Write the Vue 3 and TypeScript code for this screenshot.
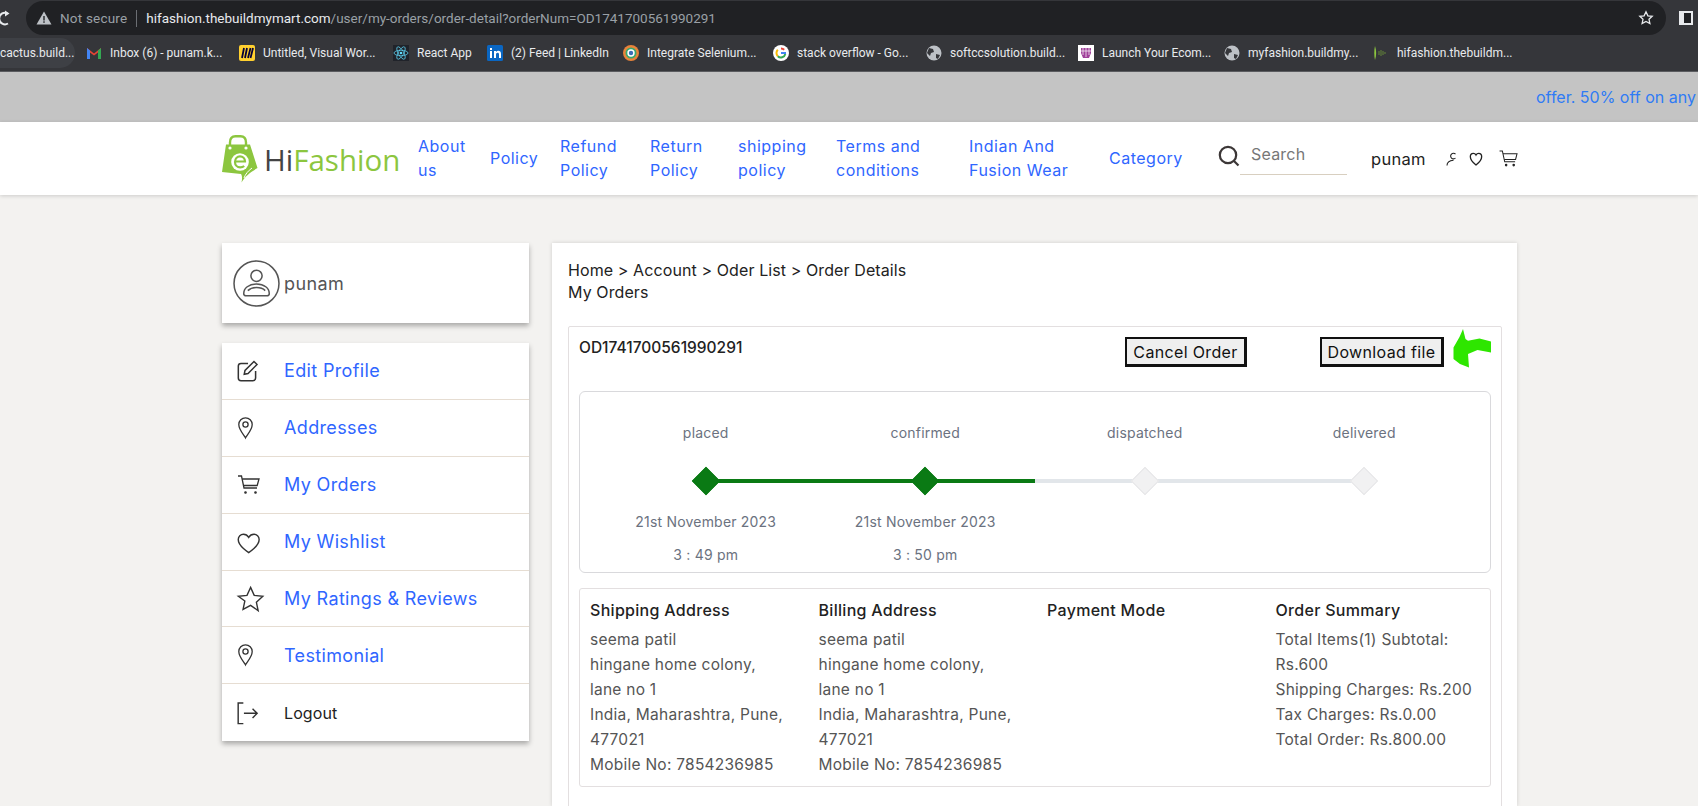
<template>
  <div class="page">
    <!-- browser chrome -->
    <div class="toolbar">
      <svg class="reload" viewBox="0 0 16 16" fill="none" stroke="#e8eaed" stroke-width="2"><path d="M9.500 3.300A5.800 5.800 0 1 0 10 13.500" /><path d="M7 0.500l4.500 3L7 6.500z" fill="#e8eaed" stroke="none" /></svg>
      <div class="urlbar">
        <svg class="warn" viewBox="0 0 16 16"><path d="M8 1.500 15.500 14.500H.5z" fill="#bdc1c6" /><rect x="7.300" y="6" width="1.400" height="4.500" fill="#202124" /><rect x="7.300" y="11.300" width="1.400" height="1.500" fill="#202124" /></svg>
        <span class="not-secure">Not secure</span>
        <span class="url-sep"></span>
        <span class="url"><b>hifashion.thebuildmymart.com</b>/user/my-orders/order-detail?orderNum=OD1741700561990291</span>
        <svg class="star" viewBox="0 0 16 16" fill="none" stroke="#e8eaed" stroke-width="1.300"><path d="M8 1.800l1.900 4 4.300.5-3.200 3 .9 4.300L8 11.400l-3.900 2.200.9-4.300-3.200-3 4.300-.5z" /></svg>
      </div>
      <div class="side-panel"><span></span></div>
    </div>
    <div class="bookmarks">
      <div class="bm-first">cactus.build...</div>
      <div v-for="b in bookmarks" :key="b.text" class="bm" :style="{ width: b.w + 'px' }">
        <svg class="bm-icon" viewBox="0 0 16 16" v-html="b.icon"></svg>
        <span>{{ b.text }}</span>
      </div>
    </div>

    <!-- offer strip -->
    <div class="offer"><span>offer. 50% off on any</span></div>

    <!-- site header -->
    <header class="site-header">
      <div class="logo">
        <svg class="logo-bag" viewBox="0 0 36 48">
          <path d="M8 12V7.500C8 3 10.500 1.200 13.500 1.200h5c3 0 5.500 1.800 5.500 6.300V13" fill="none" stroke="#8cc63f" stroke-width="2.400" />
          <path d="M4 9.500H28L35.500 33C29 37 23 41 19.500 47.500 20.500 43 20 40.500 19 39L0 37z" fill="#8cc63f" />
          <circle cx="8" cy="13" r="1.600" fill="#fff" />
          <circle cx="24" cy="13" r="1.600" fill="#fff" />
          <circle cx="18" cy="27" r="8.800" fill="#fff" />
          <path d="M13 26.500h10c0-3.200-2.200-5.200-5-5.200s-5 2.400-5 5.600 2.200 5.500 5.200 5.500c1.600 0 3-.5 4-1.400" fill="none" stroke="#8cc63f" stroke-width="2.200" />
          <path d="M30 33C26 36 23.500 39 22 43" fill="none" stroke="#fff" stroke-width="1" />
        </svg>
        <span class="logo-text"><span class="logo-hi">Hi</span>Fashion</span>
      </div>
      <nav class="nav">
        <a v-for="n in navLinks" :key="n" class="nav-link">{{ n }}</a>
      </nav>
      <svg class="search-icon" viewBox="0 0 22 22" fill="none" stroke="#3c3737" stroke-width="2.200"><circle cx="10" cy="10" r="8.200" /><path d="M16 16l4.500 4.500" /></svg>
      <div class="search">Search</div>
      <span class="user-name">punam</span>
      <svg class="hd-person" viewBox="0 0 10 14" fill="none" stroke="#222" stroke-width="1.100"><path d="M9.500 2.200A2.800 2.800 0 1 0 9.500 6" /><path d="M1 13.500C1 10.500 3.500 8.600 7.500 8.300" /></svg>
      <svg class="hd-heart" viewBox="0 0 24 24" fill="none" stroke="#222" stroke-width="2"><path d="M12 21S3.500 14 3.500 8.500C3.500 5.500 5.700 3.500 8 3.500c1.800 0 3.200 1 4 2.500.8-1.500 2.200-2.500 4-2.500 2.300 0 4.500 2 4.500 5C20.500 14 12 21 12 21z" /></svg>
      <svg class="hd-cart" viewBox="0 0 20 18" fill="none" stroke="#222" stroke-width="1.100"><path d="M.5 1H3.500L6 12.500H17" /><path d="M4.200 4H19L17.500 10H5.500" /><circle cx="7.500" cy="16" r=".8" fill="#222" /><circle cx="15.500" cy="16" r=".8" fill="#222" /></svg>
    </header>

    <main class="content">
      <!-- left column -->
      <aside class="side">
        <div class="card profile">
          <svg class="avatar" viewBox="0 0 46 46" fill="none" stroke="#555" stroke-width="1.500">
            <circle cx="23" cy="23" r="22" />
            <circle cx="23" cy="15.500" r="5.500" />
            <path d="M10.500 33c0-5.500 5-9.500 12.500-9.500S35.500 27.500 35.500 33c0 1.500-1 2-2.500 2H13c-1.500 0-2.500-.5-2.500-2z" />
            <path d="M14.500 30c2-2 5-3 8.500-3s6.500 1 8.500 3" />
          </svg>
          <span>punam</span>
        </div>
        <div class="card menu">
          <div v-for="m in menu" :key="m.text" class="menu-row">
            <svg class="menu-icon" viewBox="0 0 26 24" fill="none" stroke="#333" stroke-width="1.300" v-html="icons[m.icon]"></svg>
            <span :class="m.plain ? 'menu-plain' : 'menu-link'">{{ m.text }}</span>
          </div>
        </div>
      </aside>

      <!-- order detail -->
      <section class="detail">
        <div class="crumbs">Home &gt; Account &gt; Oder List &gt; Order Details</div>
        <div class="crumbs">My Orders</div>

        <div class="order">
          <div class="order-top">
            <span class="order-num">OD1741700561990291</span>
            <button class="btn btn-cancel">Cancel Order</button>
            <button class="btn btn-download">Download file</button>
          </div>
          <svg class="hand" viewBox="0 0 40 40"><path d="M11 0 13.500 10l2.500 1.700 11.500-2.300L39 12.500V23.500L25.500 21 16 25l1 13.500-9-3.500-6.500-5V18.500L7.500 8z" fill="#2ee600" /></svg>

          <div class="tracker">
            <div v-for="(s, i) in steps" :key="s.label" class="step">
              <div class="step-label">{{ s.label }}</div>
              <div class="rail">
                <span class="seg" :class="segClass(i, 'left')"></span>
                <span class="seg" :class="segClass(i, 'right')"></span>
                <span class="diamond" :class="{ done: s.done }"></span>
              </div>
              <div class="step-date">{{ s.date }}</div>
              <div class="step-time">{{ s.time }}</div>
            </div>
          </div>

          <div class="info">
            <div v-for="c in infoCols" :key="c.title" class="info-col">
              <div class="info-title">{{ c.title }}</div>
              <div v-for="l in c.lines" :key="l" class="info-line">{{ l }}</div>
            </div>
          </div>
        </div>
      </section>
    </main>
  </div>
</template>

<script setup lang="ts">
const globe = '<circle cx="8" cy="8" r="7.500" fill="#bdc1c6"/><path d="M3 3l4 1 1 3-3 1-1 3-3-3zM10 9l4 1-2 4-2-1z" fill="#35363a"/>'

const bookmarks = [
  { text: 'Inbox (6) - punam.k...', w: 153, icon: '<path d="M1 14V3l7 5.500L15 3v11h-3V7.500L8 10.500 4 7.500V14z" fill="#ea4335"/><path d="M1 14V3l3 2.500V14z" fill="#4285f4"/><path d="M15 14V3l-3 2.500V14z" fill="#34a853"/>' },
  { text: 'Untitled, Visual Wor...', w: 154, icon: '<rect width="16" height="16" rx="2" fill="#ffd02f"/><path d="M5 3 3 13M8 3 6 13M11.500 3 9 13M14 3l-2.500 10" stroke="#050038" stroke-width="1.800"/>' },
  { text: 'React App', w: 94, icon: '<rect width="16" height="16" fill="#20232a"/><circle cx="8" cy="8" r="1.300" fill="#61dafb"/><g fill="none" stroke="#61dafb" stroke-width=".7"><ellipse cx="8" cy="8" rx="7" ry="2.700"/><ellipse cx="8" cy="8" rx="7" ry="2.700" transform="rotate(60 8 8)"/><ellipse cx="8" cy="8" rx="7" ry="2.700" transform="rotate(120 8 8)"/></g>' },
  { text: '(2) Feed | LinkedIn', w: 136, icon: '<rect width="16" height="16" rx="1.500" fill="#0a66c2"/><path d="M3 6h2v7H3zM3 3h2v2H3zM7 6h2v1c.6-.8 1.400-1.200 2.300-1.200C13 5.800 14 7 14 9v4h-2V9.500C12 8.300 11.500 7.700 10.500 7.700S9 8.400 9 9.500V13H7z" fill="#fff"/>' },
  { text: 'Integrate Selenium...', w: 150, icon: '<circle cx="8" cy="8" r="8" fill="#e8833a"/><circle cx="8" cy="8" r="5.500" fill="#3aa76d"/><circle cx="8" cy="8" r="3.700" fill="#fff"/><circle cx="8" cy="8" r="2.200" fill="#3a6db5"/>' },
  { text: 'stack overflow - Go...', w: 153, icon: '<circle cx="8" cy="8" r="8" fill="#fff"/><path d="M8 3.500A4.500 4.500 0 0 1 11.200 4.800" fill="none" stroke="#ea4335" stroke-width="2"/><path d="M4.800 4.800A4.500 4.500 0 0 0 4.800 11.200" fill="none" stroke="#fbbc05" stroke-width="2"/><path d="M4.800 11.200A4.500 4.500 0 0 0 12.300 9" fill="none" stroke="#34a853" stroke-width="2"/><path d="M8 8h5" stroke="#4285f4" stroke-width="2"/>' },
  { text: 'softccsolution.build...', w: 152, icon: globe },
  { text: 'Launch Your Ecom...', w: 146, icon: '<rect width="16" height="16" fill="#fff"/><path d="M3 3h10v5l-2 5H5L3 8z" fill="#a0409a"/><path d="M3 6h10M5 3v7M8 3v9M11 3v7" stroke="#fff" stroke-width=".7"/>' },
  { text: 'myfashion.buildmy...', w: 149, icon: globe },
  { text: 'hifashion.thebuildm...', w: 150, icon: '<path d="M2 1c1.500 4 1.500 10 0 14-1-4-1-10 0-14z" fill="#8cc63f"/><path d="M6 6v4M8 5v6M10 6v4M12 7v2" stroke="#5d7a3a" stroke-width="1.200"/>' },
]

const navLinks = ['About us', 'Policy', 'Refund Policy', 'Return Policy', 'shipping policy', 'Terms and conditions', 'Indian And Fusion Wear', 'Category']

const pin = '<path d="M7.500 21.800C6.500 19.500.8 14 .8 8.500a6.700 6.700 0 0 1 13.400 0C14.200 14 8.500 19.500 7.500 21.800z"/><circle cx="7.500" cy="8.500" r="2.600"/>'
const icons: Record<string, string> = {
  edit: '<g transform="translate(-4 -1) scale(1.080)" stroke-width="1.400"><path d="M13 5H6.500C5 5 4 6 4 7.500v11C4 20 5 21 6.500 21h11c1.500 0 2.500-1 2.500-2.500V12"/><path d="M9.500 15l.7-3.500L18.500 3.200l2.800 2.800-8.300 8.300z"/></g>',
  pin,
  cart: '<g transform="translate(-1 0)"><path d="M1 3h3.500L7 15h13"/><path d="M5.200 6H22l-1.800 6.500H6.500"/><circle cx="8.500" cy="19.500" r=".7" fill="#333"/><circle cx="18.500" cy="19.500" r=".7" fill="#333"/></g>',
  heart: '<g transform="translate(-2.500 0) scale(1.100)"><path d="M12 20.500S2.500 14.800 2.500 8.700C2.500 5.800 4.700 3.800 7.200 3.800c2 0 3.700 1 4.800 2.800 1.100-1.800 2.800-2.800 4.800-2.800 2.500 0 4.700 2 4.700 4.900 0 6.100-9.500 11.800-9.500 11.800z"/></g>',
  star: '<g transform="translate(-1.800 -2) scale(1.200)" stroke-width="1.150"><path d="M12 2l3 6.600 7.200.8-5.400 4.900 1.500 7.100L12 17l-6.300 3.400 1.500-7.100L1.800 9.400 9 8.600z"/></g>',
  logout: '<g transform="translate(-5 -1.500) scale(1.150)" stroke-width="1.250"><path d="M9 3H4.500v18H9"/><path d="M9.500 12H21M17 8l4 4-4 4"/></g>',
}

const menu = [
  { text: 'Edit Profile', icon: 'edit' },
  { text: 'Addresses', icon: 'pin' },
  { text: 'My Orders', icon: 'cart' },
  { text: 'My Wishlist', icon: 'heart' },
  { text: 'My Ratings & Reviews', icon: 'star' },
  { text: 'Testimonial', icon: 'pin' },
  { text: 'Logout', icon: 'logout', plain: true },
]

const steps = [
  { label: 'placed', done: true, date: '21st November 2023', time: '3 : 49 pm' },
  { label: 'confirmed', done: true, date: '21st November 2023', time: '3 : 50 pm' },
  { label: 'dispatched', done: false, date: '', time: '' },
  { label: 'delivered', done: false, date: '', time: '' },
]

// green runs up to the right edge of the last finished step
function segClass(i: number, side: 'left' | 'right') {
  if (i === 0 && side === 'left') return 'none'
  if (i === steps.length - 1 && side === 'right') return 'none'
  if (steps[i].done) return 'green'
  return 'grey'
}

const address = ['seema patil', 'hingane home colony,', 'lane no 1', 'India, Maharashtra, Pune,', '477021', 'Mobile No: 7854236985']
const infoCols = [
  { title: 'Shipping Address', lines: address },
  { title: 'Billing Address', lines: address },
  { title: 'Payment Mode', lines: [] as string[] },
  { title: 'Order Summary', lines: ['Total Items(1) Subtotal:', 'Rs.600', 'Shipping Charges: Rs.200', 'Tax Charges: Rs.0.00', 'Total Order: Rs.800.00'] },
]
</script>

<style>
html, body {
  margin: 0;
  height: 100%;
  overflow: hidden;
  background: #f3f2f0;
}
</style>

<style scoped>
.page {
  height: 806px;
  overflow: hidden;
  font-family: Inter, "Noto Sans", sans-serif;
  background: #f3f2f0;
}

/* browser chrome */
.toolbar {
  height: 35px;
  background: #35363a;
  display: flex;
  align-items: center;
}
.reload {
  width: 16px;
  height: 16px;
  margin-left: -2px;
  flex: none;
}
.urlbar {
  margin-left: 12px;
  width: 1640px;
  height: 34px;
  margin-top: 1px;
  background: #202124;
  border-radius: 17px;
  display: flex;
  align-items: center;
  padding-left: 10px;
  box-sizing: border-box;
  font-family: Roboto, sans-serif;
  font-size: 13.5px;
}
.warn {
  width: 16px;
  height: 16px;
  flex: none;
}
.not-secure {
  margin-left: 8px;
  color: #9aa0a6;
  letter-spacing: 0.2px;
}
.url-sep {
  width: 1px;
  height: 17px;
  background: #6b6e73;
  margin: 0 9px;
}
.url {
  color: #9aa0a6;
}
.url b {
  color: #e8eaed;
  font-weight: 400;
}
.star {
  width: 16px;
  height: 16px;
  margin-left: auto;
  margin-right: 12px;
  flex: none;
}
.side-panel {
  margin-left: 13px;
  width: 14px;
  height: 14px;
  background: #e8eaed;
  display: flex;
  justify-content: flex-end;
  box-sizing: border-box;
  padding: 2px;
  flex: none;
}
.side-panel span {
  width: 7px;
  background: #202124;
}

.bookmarks {
  height: 36px;
  background: #35363a;
  border-bottom: 1px solid #5b5c60;
  display: flex;
  align-items: center;
  font-family: Roboto, sans-serif;
  font-size: 12px;
  color: #e8eaed;
  white-space: nowrap;
  overflow: hidden;
}
.bm-first {
  width: 75px;
  height: 30px;
  line-height: 30px;
  background: #3e4045;
  border-radius: 0 15px 15px 0;
  margin-right: 11px;
  flex: none;
  overflow: hidden;
}
.bm {
  display: flex;
  align-items: center;
  gap: 8px;
  flex: none;
}
.bm-icon {
  width: 16px;
  height: 16px;
  flex: none;
}

.offer {
  height: 50px;
  background: #c4c4c4;
  display: flex;
  align-items: center;
  padding-left: 1536px;
  white-space: nowrap;
  font-size: 16px;
  color: #2f7bf5;
}

/* site header */
.site-header {
  height: 73px;
  background: #fff;
  box-shadow: 0 1px 4px rgba(0, 0, 0, 0.16);
  display: flex;
  align-items: center;
  padding-left: 222px;
  position: relative;
}
.logo {
  width: 178px;
  height: 50px;
  display: flex;
  align-items: center;
  gap: 6px;
  flex: none;
}
.logo-bag {
  width: 36px;
  height: 48px;
  flex: none;
}
.logo-text {
  font-family: "Open Sans", sans-serif;
  font-size: 29.5px;
  color: #8cc63f;
  margin-top: 2px;
}
.logo-hi {
  color: #444;
}
.nav {
  margin-left: 18px;
  margin-top: -2px;
  display: grid;
  grid-template-columns: 72px 70px 90px 88px 98px 133px 140px 109px;
  align-items: center;
  flex: none;
}
.nav-link {
  font-size: 16px;
  line-height: 24px;
  letter-spacing: 0.5px;
  color: #2f66ff;
  padding-right: 20px;
}
.search-icon {
  width: 22px;
  height: 22px;
  flex: none;
  margin-top: -6px;
}
.search {
  width: 96px;
  height: 36px;
  padding-left: 11px;
  line-height: 32px;
  font-size: 16px;
  letter-spacing: 0.2px;
  color: #777;
  border-bottom: 1px solid #d8cfc0;
  margin-top: -4px;
  flex: none;
}
.user-name {
  margin-left: 24px;
  font-size: 16.5px;
  letter-spacing: 0.3px;
  color: #222;
  flex: none;
}
.hd-person {
  width: 10px;
  height: 14px;
  margin-left: 20px;
  flex: none;
}
.hd-heart {
  width: 16px;
  height: 16px;
  margin-left: 12px;
  flex: none;
}
.hd-cart {
  width: 19px;
  height: 17px;
  margin-left: 15px;
  flex: none;
}

/* page body */
.content {
  padding: 48px 0 0 222px;
  display: flex;
  gap: 23px;
  align-items: flex-start;
}
.side {
  width: 307px;
  display: flex;
  flex-direction: column;
  gap: 20px;
}
.card {
  background: #fff;
  box-shadow: 0 3px 5px rgba(0, 0, 0, 0.3);
}
.profile {
  height: 80px;
  display: flex;
  align-items: center;
  padding-left: 11px;
  gap: 4px;
  font-size: 18px;
  letter-spacing: 0.4px;
  color: #555;
}
.avatar {
  width: 47px;
  height: 47px;
  flex: none;
}
.menu-row {
  height: 56.9px;
  display: flex;
  align-items: center;
  box-sizing: border-box;
  padding-left: 16px;
  border-bottom: 1px solid #e6ddd2;
}
.menu-row:last-child {
  border-bottom: 0;
}
.menu-icon {
  width: 26px;
  height: 24px;
  flex: none;
  margin-right: 20px;
  overflow: visible;
}
.menu-link {
  font-size: 18px;
  letter-spacing: 0.35px;
  color: #2f66ff;
}
.menu-plain {
  font-size: 16px;
  letter-spacing: 0.1px;
  color: #222;
}

.detail {
  width: 965px;
  height: 563px;
  box-sizing: border-box;
  background: #fff;
  box-shadow: 0 0 4px rgba(0, 0, 0, 0.15);
  padding: 16px 15px 0 16px;
}
.crumbs {
  font-size: 16px;
  line-height: 22px;
  letter-spacing: 0.1px;
  color: #222;
}
.order {
  margin-top: 23px;
  height: 500px;
  border: 1px solid #e3dfe0;
  border-radius: 2px;
  position: relative;
  padding: 0 10px;
}
.order-top {
  height: 64px;
  display: flex;
  align-items: flex-start;
}
.order-num {
  font-size: 15.500px;
  font-weight: 500;
  color: #222;
  width: 546px;
  margin-top: 11px;
  flex: none;
}
.btn {
  height: 30px;
  margin-top: 10px;
  background: #efefef;
  border: 2px solid #111;
  border-right-width: 3px;
  border-bottom-width: 3px;
  font-family: Inter, sans-serif;
  font-size: 16px;
  letter-spacing: 0.35px;
  color: #111;
  padding: 0;
  flex: none;
}
.btn-cancel {
  width: 122px;
}
.btn-download {
  width: 124px;
  margin-left: 73px;
}
.hand {
  position: absolute;
  left: 883px;
  top: 2px;
  width: 40px;
  height: 40px;
}

.tracker {
  border: 1px solid #d9d9dc;
  border-radius: 6px;
  height: 182px;
  box-sizing: border-box;
  padding: 30px 16px 0;
  display: grid;
  grid-template-columns: repeat(4, 1fr);
}
.step {
  text-align: center;
  font-size: 14px;
  letter-spacing: 0.2px;
  color: #6b7280;
}
.step-label {
  line-height: 21px;
}
.rail {
  height: 28px;
  margin-top: 24px;
  display: flex;
  align-items: center;
  position: relative;
}
.seg {
  flex: 1;
  height: 4px;
}
.seg.green {
  background: #0a7a14;
}
.seg.grey {
  background: #e2e6ea;
}
.diamond {
  position: absolute;
  left: 50%;
  top: 50%;
  width: 20px;
  height: 20px;
  box-sizing: border-box;
  transform: translate(-50%, -50%) rotate(45deg);
  background: #f1f1f2;
  border: 1px solid #e6e6e8;
}
.diamond.done {
  background: #0a7a14;
  border-color: #0a7a14;
}
.step-date {
  margin-top: 16px;
  line-height: 21px;
  min-height: 21px;
}
.step-time {
  margin-top: 12px;
  line-height: 21px;
}

.info {
  margin-top: 15px;
  border: 1px solid #e3dfe0;
  border-radius: 3px;
  height: 199px;
  box-sizing: border-box;
  padding: 9px 0 0 10px;
  display: grid;
  grid-template-columns: repeat(4, 228.500px);
}
.info-title {
  font-size: 16px;
  font-weight: 500;
  line-height: 24px;
  letter-spacing: 0.3px;
  color: #222;
  margin-bottom: 6px;
}
.info-line {
  font-size: 15.500px;
  line-height: 24.900px;
  letter-spacing: 0.25px;
  color: #555;
  white-space: nowrap;
}
</style>
